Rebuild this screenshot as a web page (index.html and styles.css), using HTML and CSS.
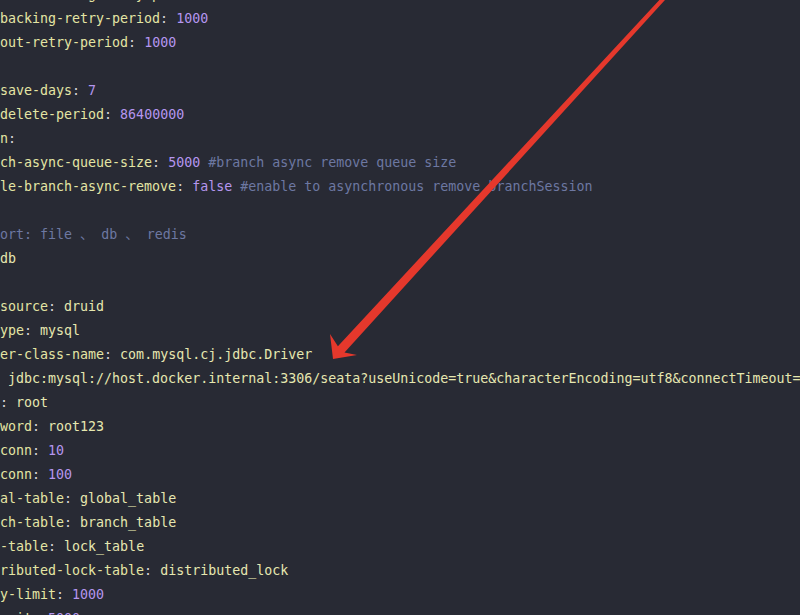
FILE: index.html
```html
<!DOCTYPE html>
<html lang="en">
<head>
    <meta charset="UTF-8">
    <meta name="viewport" content="width=device-width, initial-scale=1.0">
    <title>application.yml</title>
    <link rel="stylesheet" href="styles.css">
</head>
<body>
    <div class="editor">
<pre class="code"><span class="k">c-committing-retry-period</span><span class="p">:</span> <span class="n">1000</span>
<span class="k">backing-retry-period</span><span class="p">:</span> <span class="n">1000</span>
<span class="k">out-retry-period</span><span class="p">:</span> <span class="n">1000</span>

<span class="k">save-days</span><span class="p">:</span> <span class="n">7</span>
<span class="k">delete-period</span><span class="p">:</span> <span class="n">86400000</span>
<span class="k">n</span><span class="p">:</span>
<span class="k">ch-async-queue-size</span><span class="p">:</span> <span class="n">5000</span> <span class="c">#branch async remove queue size</span>
<span class="k">le-branch-async-remove</span><span class="p">:</span> <span class="n">false</span> <span class="c">#enable to asynchronous remove branchSession</span>

<span class="c">ort: file 、 db 、 redis</span>
<span class="s">db</span>

<span class="k">source</span><span class="p">:</span> <span class="s">druid</span>
<span class="k">ype</span><span class="p">:</span> <span class="s">mysql</span>
<span class="k">er-class-name</span><span class="p">:</span> <span class="s">com.mysql.cj.jdbc.Driver</span>
 <span class="s">jdbc:mysql://host.docker.internal:3306/seata?useUnicode=true&amp;characterEncoding=utf8&amp;connectTimeout=1000&amp;socketTimeout=3000</span>
<span class="p">:</span> <span class="s">root</span>
<span class="k">word</span><span class="p">:</span> <span class="s">root123</span>
<span class="k">conn</span><span class="p">:</span> <span class="n">10</span>
<span class="k">conn</span><span class="p">:</span> <span class="n">100</span>
<span class="k">al-table</span><span class="p">:</span> <span class="s">global_table</span>
<span class="k">ch-table</span><span class="p">:</span> <span class="s">branch_table</span>
<span class="k">-table</span><span class="p">:</span> <span class="s">lock_table</span>
<span class="k">ributed-lock-table</span><span class="p">:</span> <span class="s">distributed_lock</span>
<span class="k">y-limit</span><span class="p">:</span> <span class="n">1000</span>
<span class="k">wait</span><span class="p">:</span> <span class="n">5000</span></pre>
        <svg class="arrow" width="800" height="615" viewBox="0 0 800 615">
            <polygon points="662.5,-3.4 337.9,346.2 330,334 333,359 357,355 344.5,352.4 665.5,-0.6" fill="#e5382c"/>
        </svg>
    </div>
</body>
</html>
```

FILE: styles.css
```css
html, body {
    margin: 0;
    padding: 0;
    background: #282a34;
    overflow: hidden;
}
.editor {
    position: relative;
    width: 800px;
    height: 615px;
    overflow: hidden;
    background: #282a34;
}
.code {
    margin: -17px 0 0 0;
    padding: 0;
    font-family: "DejaVu Sans Mono", "Liberation Mono", "Noto Sans CJK SC", monospace;
    font-size: 13.3px;
    line-height: 24px;
    color: #e4e5a8;
    white-space: pre;
}
.k {
    color: #e4e5a4;
}
.s {
    color: #e6e7b0;
}
.p {
    color: #d4d4d4;
}
.n {
    color: #b596ef;
}
.c {
    color: #6d78a2;
}
.arrow {
    position: absolute;
    top: 0;
    left: 0;
}
```
